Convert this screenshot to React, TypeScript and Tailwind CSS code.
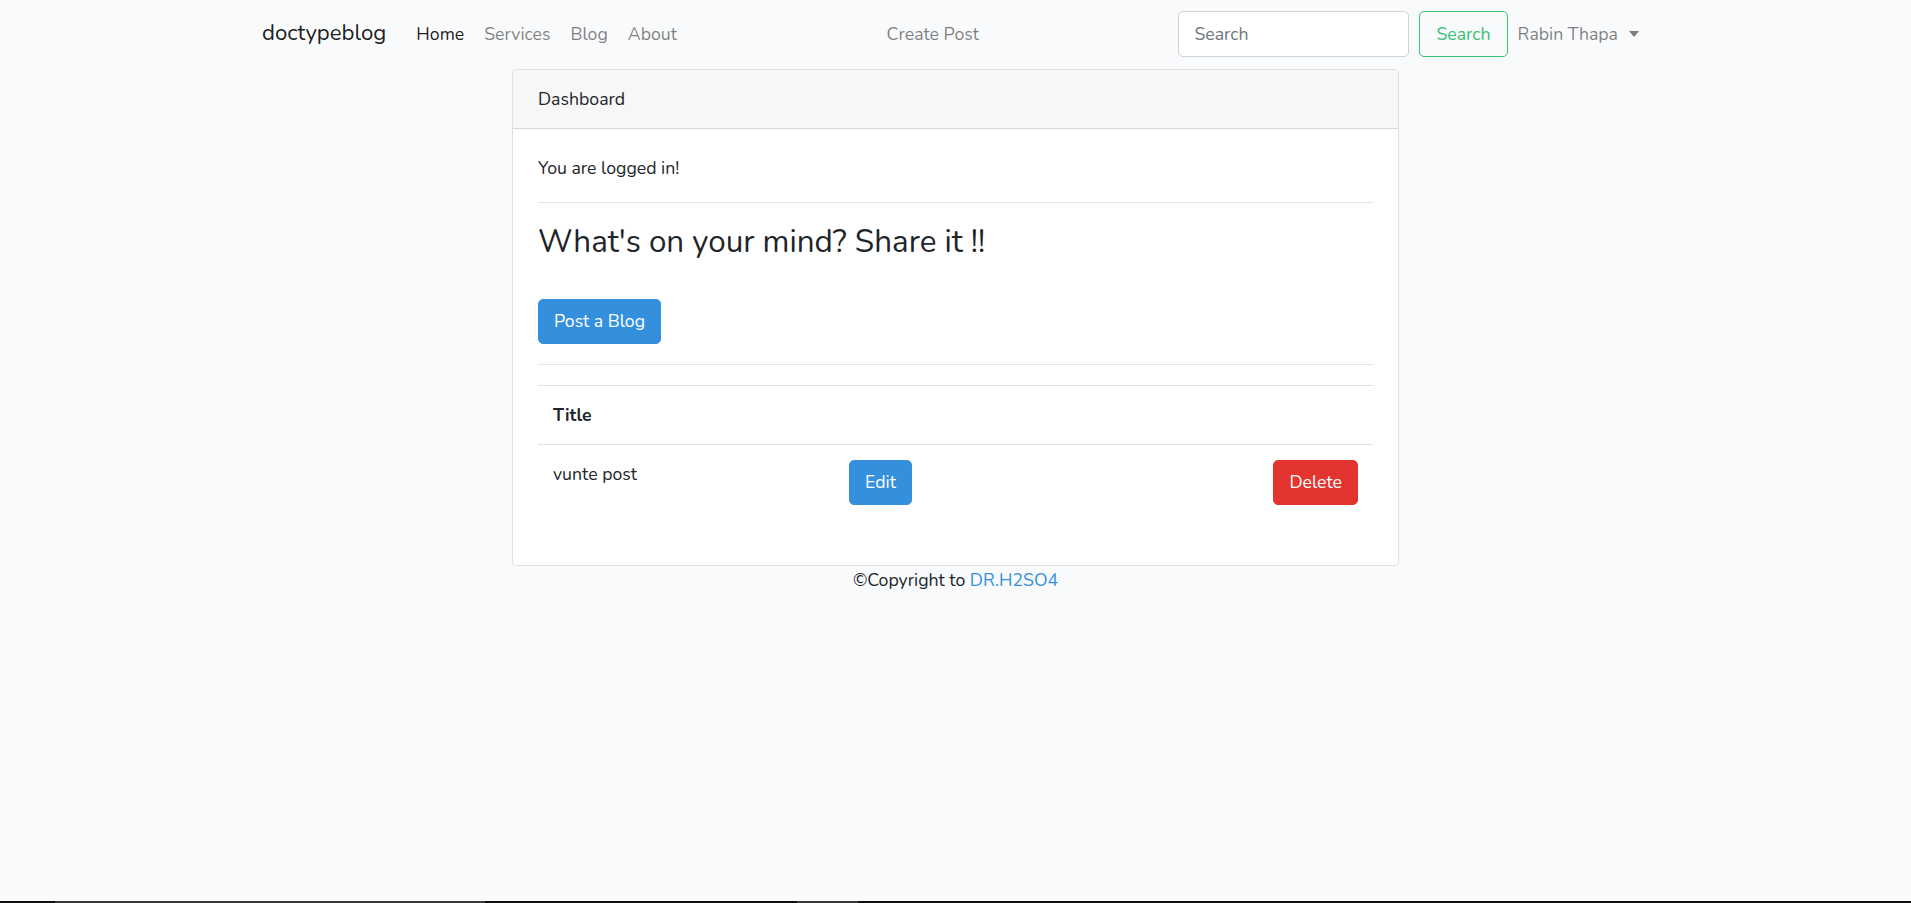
export default function App() {
  return (
    <div className="flex min-h-[903px] flex-col bg-[#f8fafc] font-['Nunito','Lato',sans-serif] text-[17.7px] leading-[28px] text-[#212529]">
      <nav className="h-[69px]">
        <div className="mx-auto flex h-full w-[1425px] items-center px-[19px] pb-[2px]">
          <a className="mr-[20px] text-[22.2px] leading-[1.5] text-black/90">doctypeblog</a>
          <ul className="flex">
            <li className="px-[10px] text-black/90">Home</li>
            <li className="px-[10px] text-black/50">Services</li>
            <li className="px-[10px] text-black/50">Blog</li>
            <li className="px-[10px] text-black/50">About</li>
          </ul>
          <ul className="mx-auto flex">
            <li className="px-[10px] text-black/50">Create Post</li>
          </ul>
          <form className="flex items-center">
            <input
              type="search"
              placeholder="Search"
              className="h-[46px] w-[231px] rounded-[5px] border border-[#ced4da] bg-white px-[15px] text-[17.7px] text-[#495057] outline-none placeholder:text-[#6c757d]"
            />
            <button
              type="button"
              className="ml-[10px] h-[46px] rounded-[5px] border border-[#38c172] px-[16px] text-[17.7px] text-[#38c172]"
            >
              Search
            </button>
          </form>
          <div className="flex items-center px-[10px] text-black/50">
            Rabin Thapa
            <span className="ml-[11px] h-0 w-0 border-x-[5px] border-t-[6px] border-x-transparent border-t-black/50" />
          </div>
        </div>
      </nav>

      <main className="flex justify-center">
        <div className="w-[887px] rounded-[5px] border border-black/[.125] bg-white">
          <div className="rounded-t-[5px] border-b border-black/[.125] bg-black/[.03] px-[25px] py-[15px]">Dashboard</div>
          <div className="p-[25px]">
            <div>You are logged in!</div>
            <hr className="my-[20px] border-t border-black/10" />
            <h3 className="mb-[10px] text-[31.4px] font-normal leading-[1.2]">What's on your mind? Share it !!</h3>
            <div className="h-[28px]" />
            <button
              type="button"
              className="rounded-[5px] border border-[#3490dc] bg-[#3490dc] px-[15px] py-[7.5px] text-white"
            >
              Post a Blog
            </button>
            <hr className="my-[20px] border-t border-black/10" />
            <div className="mb-[20px]">
              <div className="flex border-t border-b border-[#dee2e6]">
                <div className="w-[296px] p-[15px] font-bold">Title</div>
                <div className="flex-1 p-[15px]" />
              </div>
              <div className="flex">
                <div className="w-[296px] p-[15px]">vunte post</div>
                <div className="flex-1 p-[15px]">
                  <button
                    type="button"
                    className="rounded-[5px] border border-[#3490dc] bg-[#3490dc] px-[15px] py-[7.5px] text-white"
                  >
                    Edit
                  </button>
                </div>
                <div className="p-[15px]">
                  <button
                    type="button"
                    className="rounded-[5px] border border-[#e3342f] bg-[#e3342f] px-[15px] py-[7.5px] text-white"
                  >
                    Delete
                  </button>
                </div>
              </div>
            </div>
          </div>
        </div>
      </main>

      <footer className="text-center">
        ©Copyright to <a className="text-[#3490dc]">DR.H2SO4</a>
      </footer>

      <div className="flex-1" />
      <div className="flex h-[2px] bg-[#0f0f0f]">
        <div className="ml-[55px] w-[430px] bg-[#3a3a3a]" />
        <div className="ml-[312px] w-[61px] bg-[#3a3a3a]" />
      </div>
    </div>
  );
}
